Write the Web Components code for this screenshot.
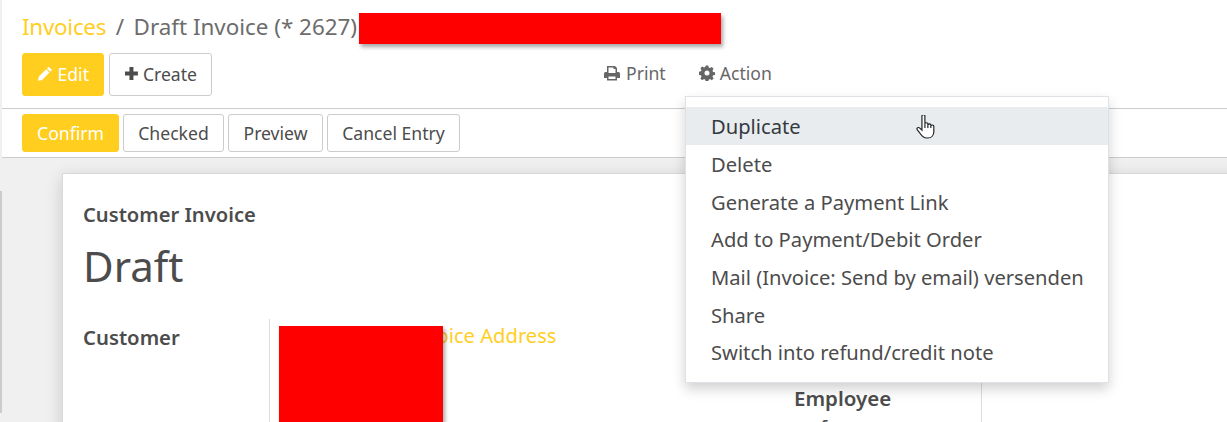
<!doctype html>
<html><head><meta charset="utf-8"><style>
html,body{margin:0;padding:0;height:422px;overflow:hidden;background:#fff;font-family:"Noto Sans","Open Sans",sans-serif;color:#4c4c4c}
</style></head><body>
<template id="t-btn"><style>
:host{display:inline-flex;box-sizing:border-box;align-items:center;justify-content:center;gap:4px;height:37px;padding:0 14px;border:1px solid #ccc;border-radius:3px;background:#fff;font-size:17.6px;color:#4c4c4c;white-space:nowrap}
:host([primary]){background:#ffce1f;border-color:#ffce1f;color:#fff}
</style><slot></slot></template>
<template id="t-item"><style>
:host{display:flex;box-sizing:border-box;align-items:center;height:37.7px;padding:1px 25px 0;font-size:20.160px;color:#4c4c4c;white-space:nowrap}
:host([active]){background:#e9ecef;color:#343a40}
</style><slot></slot></template>
<template id="t-menu"><style>
:host{position:absolute;left:685px;top:96px;width:424px;height:287px;box-sizing:border-box;padding:10px 0 0;background:#fff;border:1px solid #dee2e6;box-shadow:0 6px 12px rgba(0,0,0,.18);z-index:5}
</style><slot></slot></template>
<template id="t-redact"><style>
:host{position:absolute;background:#f00;box-shadow:2px 3px 4px rgba(0,0,0,.35);z-index:3}
</style></template>
<template id="t-app"><style>
:host{display:block;position:relative;width:1227px;height:422px;overflow:hidden;box-sizing:border-box;padding-left:2px;background:#f0f0f0}
.cp{background:#fff;height:158px;box-sizing:border-box;border-bottom:1px solid #ccc;display:flex;flex-direction:column}
.top{height:109px;box-sizing:border-box;border-bottom:1px solid #ccc;padding:0 20px;display:flex;flex-direction:column}
.crumb{height:53px;display:flex;align-items:center;font-size:22.400px;color:#6c6c6c;white-space:nowrap;box-sizing:border-box}
.crumb a{color:#ffce1f;letter-spacing:-.25px}.crumb i{font-style:normal;padding:0 9.5px}
.row{display:flex;align-items:flex-start}
.left{display:flex;gap:5px;width:581px}
.tool{display:flex;gap:33px;font-size:17.6px;color:#666;height:40px;align-items:center}
.tool span{display:flex;gap:5px;align-items:center}
.status{display:flex;gap:4px;padding:5px 20px 0}
.status res-btn{height:38px}
.left res-btn{height:43px;padding-bottom:2px}
svg{display:block;fill:currentColor}
.sheet{position:absolute;left:62px;top:173px;width:1400px;height:400px;background:#fff;border:1px solid #d9d9d9;box-shadow:0 4px 16px rgba(0,0,0,.16);box-sizing:border-box;padding:0 20px}
.sh-t{font-weight:600;font-size:20.160px;margin-top:27px;line-height:26px}
.dr{font-size:42px;line-height:54px;margin-top:12px}
.grid{display:grid;grid-template-columns:186px 1fr;margin-top:26px}
.lab{font-weight:600;font-size:20.300px;line-height:26px;padding-top:5px}
.val{border-left:1px solid #ddd;height:200px;padding-left:137px;color:#ffce1f;font-size:20.160px;line-height:30px;padding-top:1px;box-sizing:border-box}
.emp{position:absolute;left:731px;top:211px;font-weight:600;font-size:20.500px;line-height:26px;white-space:nowrap}
.frag{position:absolute;left:757px;top:240px;font-size:20.160px;line-height:26px}
.vline{position:absolute;left:918px;top:0;height:400px;border-left:1px solid #ddd}
.edge{position:absolute;left:0;top:191px;width:2px;height:222px;background:#ccc}
.hand{position:absolute;left:916px;top:115px;z-index:6}
</style>
<div class="cp"><div class="top">
<div class="crumb"><a>Invoices</a><i>/</i><span>Draft Invoice (* 2627)</span></div>
<div class="row"><div class="left">
<res-btn primary style="width:82px"><svg width="17" height="17" viewBox="0 0 17 17"><path d="M12 1.500l3.500 3.500-1.800 1.800-3.500-3.500zM9.400 4l3.500 3.500-7.600 7.600L1 16l.9-4.400z"/></svg>Edit</res-btn>
<res-btn style="width:103px"><svg width="15" height="15" viewBox="0 0 15 15"><path d="M5.500 1h4v4.500H14v4H9.500V14h-4V9.500H1v-4h4.500z"/></svg>Create</res-btn>
</div>
<div class="tool"><span><svg width="18" height="16" viewBox="0 0 18 16"><path fill-rule="evenodd" d="M4 1h8l2 2v4h1.500A1.500 1.500 0 0 1 17 8.500V13h-3v2.500H4V13H1V8.500A1.500 1.500 0 0 1 2.500 7H4zM5.500 2.500V8h7V4h-2V2.500zM5.500 11.500V14h7v-2.500z"/></svg>Print</span>
<span><svg width="16" height="16" viewBox="0 0 16 16"><path fill-rule="evenodd" d="M6.700.5h2.600l.4 2 1.300.6 1.800-1.100 1.800 1.800-1.100 1.800.6 1.300 2 .4v2.600l-2 .4-.6 1.300 1.100 1.800-1.800 1.800-1.800-1.100-1.300.6-.4 2H6.700l-.4-2-1.300-.6-1.800 1.100-1.800-1.800 1.100-1.800-.6-1.300-2-.4V6.700l2-.4.6-1.300L1.400 3.200l1.800-1.800L5 2.500l1.300-.6zM8 5.500a2.500 2.500 0 1 0 0 5 2.500 2.500 0 0 0 0-5z"/></svg>Action</span></div>
</div></div>
<div class="status"><res-btn primary style="width:97px">Confirm</res-btn><res-btn style="width:101px">Checked</res-btn><res-btn style="width:95px">Preview</res-btn><res-btn style="width:133px">Cancel Entry</res-btn></div>
</div>
<div class="edge"></div>
<div class="sheet">
<div class="sh-t">Customer Invoice</div>
<div class="dr">Draft</div>
<div class="grid"><div class="lab">Customer</div><div class="val">Invoice Address</div></div>
<div class="emp">Employee</div><div class="frag">f</div><div class="vline"></div>
</div>
<res-redact style="left:359px;top:13px;width:362px;height:31px"></res-redact>
<res-redact style="left:279px;top:326px;width:164px;height:96px"></res-redact>
<res-menu><res-item active>Duplicate</res-item><res-item>Delete</res-item><res-item>Generate a Payment Link</res-item><res-item>Add to Payment/Debit Order</res-item><res-item>Mail (Invoice: Send by email) versenden</res-item><res-item>Share</res-item><res-item>Switch into refund/credit note</res-item></res-menu>
<svg class="hand" width="19" height="24" viewBox="1 1.500 16 23" preserveAspectRatio="none"><path d="M6 2.500c0-1.700 2.500-1.700 2.500 0V10c0-1.300 2.500-1.300 2.500 0v1c0-1.300 2.500-1.300 2.500 0v1c0-1.300 2.500-1.300 2.500 0v5.500c0 3.500-2 6-5 6H10c-2.500 0-3.500-1-5-3.500L2 15.500c-.8-1.500 1-2.700 2.200-1.500L6 16z" fill="#fff" stroke="#222" stroke-width="1"/><path d="M8.500 10v4M11 11v3M13.500 12v2" stroke="#222" fill="none"/></svg>
</template>
<res-app></res-app>
<script>
function def(name,tid){customElements.define(name,class extends HTMLElement{constructor(){super();this.attachShadow({mode:'open'}).appendChild(document.getElementById(tid).content.cloneNode(true));}});}
def('res-btn','t-btn');def('res-item','t-item');def('res-menu','t-menu');def('res-redact','t-redact');def('res-app','t-app');
</script>
</body></html>
